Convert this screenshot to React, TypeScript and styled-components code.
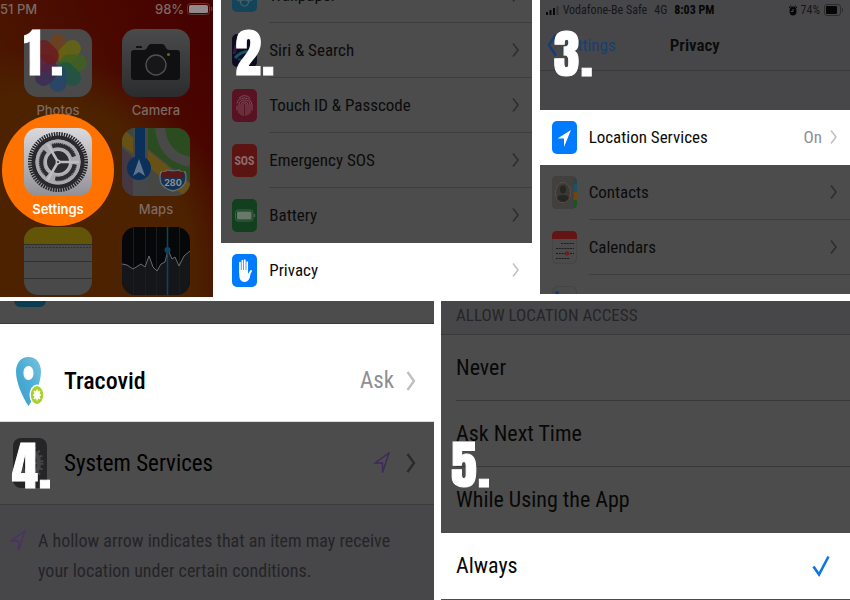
import React from "react";
import styled, { createGlobalStyle, css } from "styled-components";

const GlobalStyle = createGlobalStyle`
  *, *::before, *::after { box-sizing: border-box; }
  body { margin: 0; background: #ffffff; }
`;

const narrow = `"Roboto Condensed", Roboto, "Liberation Sans", sans-serif`;
const dimWhite = "#4c4c4c";
const dimGrey = "#474749";

const Page = styled.main`
  display: flex;
  flex-direction: column;
  gap: 3px;
  overflow: hidden;
  font-family: ${narrow};
  color: #0b0b0b;
`;

const TopRow = styled.div`
  display: grid;
  grid-template-columns: 213fr 310fr 310fr;
  column-gap: 8px;
  align-items: start;
`;

const BottomRow = styled.div`
  display: grid;
  grid-template-columns: 434fr 409fr;
  column-gap: 7px;
  align-items: start;
`;

const Panel = styled.section`
  position: relative;
  overflow: hidden;
  background: ${dimWhite};
`;

const StepLabel = styled.span<{ $x: number; $y: number }>`
  position: absolute;
  left: ${(p) => p.$x}px;
  top: ${(p) => p.$y}px;
  display: flex;
  font-family: Anton, Impact, "Roboto Condensed", sans-serif;
  font-size: 52px;
  line-height: 60px;
  color: #ffffff;
  -webkit-text-stroke: 1px #ffffff;
  pointer-events: none;
`;

const Digit = styled.span`
  min-width: 27px;
`;

const Step = ({ n, x, y }: { n: number; x: number; y: number }) => (
  <StepLabel $x={x} $y={y}><Digit>{n}</Digit><span>.</span></StepLabel>
);

const plainButton = css`
  border: 0;
  margin: 0;
  padding: 0;
  background: none;
  font: inherit;
  color: inherit;
  text-align: left;
  cursor: pointer;
`;

/* ---------- Home screen ---------- */

const Home = styled(Panel)`
  height: 297px;
  background:
    radial-gradient(circle at 10% 90%, #4c2200 0 52%, rgba(76, 34, 0, 0) 66%),
    linear-gradient(240deg, #450000 0%, #4a0800 32%, #4a1800 66%, #472400 100%);
  font-family: Inter, Roboto, sans-serif;
  color: #7c6963;
`;

const HomeStatus = styled.div`
  display: flex;
  align-items: center;
  gap: 3px;
  height: 18px;
  font-size: 13px;
  font-weight: 500;
  white-space: nowrap;
`;

const Spacer = styled.span`
  flex: 1;
`;

const Apps = styled.div`
  display: grid;
  grid-template-columns: 68px 68px;
  column-gap: 30px;
  grid-auto-rows: 99px;
  padding: 11px 0 0 24px;
`;

const AppButton = styled.button<{ $lit?: boolean }>`
  ${plainButton}
  position: relative;
  display: flex;
  flex-direction: column;
  align-items: center;
  gap: 4px;
  font-size: 13px;
  line-height: 18px;
  font-weight: ${(p) => (p.$lit ? 600 : 500)};
  color: ${(p) => (p.$lit ? "#ffffff" : "inherit")};

  > svg { position: relative; flex: none; }
  > span { position: relative; }
`;

const Halo = styled.i`
  position: absolute;
  width: 112px;
  height: 112px;
  left: -22px;
  top: -14px;
  border-radius: 50%;
  background: #ff7200;
`;

const Tile = ({ id, children, fill }: { id: string; children: React.ReactNode; fill: string }) => (
  <svg width="68" height="68" viewBox="0 0 68 68" aria-hidden="true">
    <defs>
      <clipPath id={id}><rect width="68" height="68" rx="14" /></clipPath>
      <linearGradient id="steel" x2="0" y2="1"><stop stopColor="#d9d9de" /><stop offset="1" stopColor="#909096" /></linearGradient>
      <linearGradient id="shade" x2="0" y2="1"><stop stopColor="#4a4a4b" /><stop offset="1" stopColor="#2b2c2e" /></linearGradient>
    </defs>
    <g clipPath={`url(#${id})`}>
      <rect width="68" height="68" fill={fill} />
      {children}
    </g>
  </svg>
);

const petals = ["#70401b", "#66660d", "#40601c", "#1c5543", "#24446a", "#3c2b56", "#562340", "#6b1b1b"];

const PhotosIcon = () => (
  <Tile id="photos" fill="#4a4a4a">
    {petals.map((c, i) => (
      <rect key={c} x="25.5" y="5" width="17" height="27" rx="8.5" fill={c} opacity="0.82" transform={`rotate(${i * 45} 34 34)`} />
    ))}
  </Tile>
);

const CameraIcon = () => (
  <Tile id="camera" fill="url(#shade)">
    <path d="M14 19v-1q0-1 1-1h4q1 0 1 1v1z" fill="#101012" />
    <path d="M12 21h10q2 0 3-2l1-2q1-2 3-2h11q2 0 3 2l1 2q1 2 3 2h8q3 0 3 3v24q0 3-3 3H12q-3 0-3-3V24q0-3 3-3z" fill="#101012" />
    <circle cx="34" cy="36" r="10" fill="#17171a" stroke="#505053" strokeWidth="1.4" />
    <circle cx="46.5" cy="25.5" r="1.5" fill="#74650c" />
  </Tile>
);

const SettingsIcon = () => (
  <Tile id="settings" fill="url(#steel)">
    <circle cx="34" cy="34" r="28" fill="none" stroke="#252528" strokeWidth="4" strokeDasharray="1.5 1" />
    <circle cx="34" cy="34" r="24.5" fill="none" stroke="#29292c" strokeWidth="4" />
    <circle cx="34" cy="34" r="22.5" fill="#a9a9ae" />
    <circle cx="34" cy="34" r="17" fill="none" stroke="#2d2d31" strokeWidth="4.500" strokeDasharray="27 8.6" transform="rotate(8 34 34)" />
    <circle cx="34" cy="34" r="19" fill="none" stroke="#aaaab0" strokeWidth="1.500" strokeDasharray="1 1" opacity="0.7" />
    <circle cx="34" cy="34" r="12" fill="#2d2d31" stroke="#b4b4b8" strokeWidth="2" />
    <path d="M34 34H55M34 34L23.500 15.800M34 34L23.500 52.200" stroke="#bdbdc2" strokeWidth="2.6" />
    <circle cx="34" cy="34" r="2.5" fill="#bdbdc2" />
    <circle cx="34" cy="34" r="1" fill="#2d2d31" />
  </Tile>
);

const MapsIcon = () => (
  <Tile id="maps" fill="#464644">
    <path d="M22 0h46v54L24 19z" fill="#2b4c20" />
    <path d="M0 20l16 14v34H0z" fill="#463842" />
    <path d="M0 15V0h13v22z" fill="#3c4740" />
    <path d="M0 17l62 51h6V56L22 19 0 0z" fill="#685116" />
    <path d="M38 0q3 29 30 34" fill="none" stroke="#494947" strokeWidth="10" />
    <path d="M11 0h15v68H11z" fill="#454848" />
    <path d="M13 0h10v45H13z" fill="#0b315b" />
    <circle cx="17" cy="40" r="12" fill="#0b315b" />
    <path d="M17 31l6 17-6-4-6 4z" fill="#607489" />
    <path d="M39 44q4 1 6-2 6 2 12 0 2 3 6 2 2 5 0 11-3 6-12 8-9-2-12-8-2-6 0-11z" fill="#163250" stroke="#657079" strokeWidth="1.3" />
    <path d="M40 44q5 0 6-1 5 1 10 0 2 1 6 1v5H40z" fill="#5a1718" />
    <text x="51" y="58" fontSize="9" fontWeight="700" textAnchor="middle" fill="#8a949d" fontFamily="Inter, sans-serif">280</text>
  </Tile>
);

const NotesIcon = () => (
  <Tile id="notes" fill="#494949">
    <rect width="68" height="17" fill="#625508" />
    <path d="M0 17.500H68M0 34.500H68M0 51.500H68" stroke="#303030" />
    <path d="M2 20.500H68" stroke="#2c2c2c" strokeDasharray="1.5 1.5" />
  </Tile>
);

const StocksIcon = () => (
  <Tile id="stocks" fill="#060709">
    <path d="M0 37l5 1 6 4 8-5 4 3 4-11 4 11 4 4 4-7 4-2 3-12 4 9 3-2 4 9 5-10 6-5v44H0z" fill="#14161a" />
    <path d="M11.500 0v68M23.500 0v68M34.500 0v68M57.500 0v68" stroke="#1c1d20" />
    <path d="M0 37l5 1 6 4 8-5 4 3 4-11 4 11 4 4 4-7 4-2 3-12 4 9 3-2 4 9 5-10 6-5" fill="none" stroke="#6b6b6d" />
    <path d="M45.500 0v68" stroke="#0c4463" strokeWidth="1.5" />
    <circle cx="45.5" cy="23" r="3" fill="#0c4463" />
  </Tile>
);

/* ---------- Settings lists ---------- */

const Row = styled.button<{ $inset: number; $lit?: boolean }>`
  ${plainButton}
  display: flex;
  flex: none;
  align-items: center;
  gap: 12px;
  width: 100%;
  height: 55px;
  padding-left: ${(p) => p.$inset}px;
  background: ${(p) => (p.$lit ? "#ffffff" : dimWhite)};

  > svg { flex: none; }
`;

const RowBody = styled.span<{ $line?: boolean }>`
  display: flex;
  flex: 1;
  align-items: center;
  gap: 8px;
  height: 100%;
  padding-right: 13px;
  border-bottom: 1px solid ${(p) => (p.$line ? "#3d3d3e" : "transparent")};
  font-size: 17px;
  white-space: nowrap;
`;

const RowText = styled.span`
  flex: 1;
`;

const RowValue = styled.span`
  color: #8e8e93;
`;

const Clip = styled.div<{ $h: number; $end?: boolean }>`
  display: flex;
  align-items: ${(p) => (p.$end ? "flex-end" : "flex-start")};
  height: ${(p) => p.$h}px;
  overflow: hidden;
`;

const Chevron = ({ color, big }: { color: string; big?: boolean }) => (
  <svg width={big ? 10 : 7} height={big ? 20 : 14} viewBox={big ? "0 0 10 20" : "0 0 7 14"} fill="none" aria-hidden="true">
    <path d={big ? "M1.500 1L8 10L1.500 19" : "M1 0.500L6 7L1 13.500"} stroke={color} strokeWidth={big ? 2.4 : 1.6} />
  </svg>
);

const Glyph = ({ fill, children }: { fill: string; children?: React.ReactNode }) => (
  <svg width="25" height="33" viewBox="0 0 25 33" aria-hidden="true">
    <rect width="25" height="33" rx="5" fill={fill} />
    {children}
  </svg>
);

const WallpaperGlyph = () => (
  <Glyph fill="#144459">
    <g fill="none" stroke="#47626d" strokeWidth="1.2">
      <circle cx="12.5" cy="12" r="4" /><circle cx="8" cy="18" r="4" /><circle cx="17" cy="18" r="4" />
      <circle cx="12.5" cy="23" r="4" /><circle cx="12.5" cy="18" r="3" />
    </g>
  </Glyph>
);

const SiriGlyph = () => (
  <Glyph fill="#0e0d1e">
    <path d="M2 20Q5 5 12 3" stroke="#351647" strokeWidth="3" fill="none" />
    <path d="M3 24q9-10 19-4" stroke="#195267" strokeWidth="3" fill="none" />
    <path d="M6 25q9 4 15-12" stroke="#183459" strokeWidth="2" fill="none" />
  </Glyph>
);

const TouchGlyph = () => (
  <Glyph fill="#591224">
    <g fill="none" stroke="#7d4b55" strokeWidth="1" strokeLinecap="round">
      <path d="M7 9q5.500-5 11 0M5 14q1-5 7.500-5t7.500 7v5M5 21v-4M7 24v-8q0-5 5.500-5t5.500 5v8M9 25.500V16q0-3.200 3.500-3.200T16 16v9.500M11 26.500V16q0-1.600 1.500-1.600T14 16v10.500" />
    </g>
  </Glyph>
);

const SosGlyph = () => (
  <Glyph fill="#5c1413">
    <text x="12.5" y="21" fontSize="12" fontWeight="700" textAnchor="middle" fill="#8a6c6c" fontFamily={narrow}>SOS</text>
  </Glyph>
);

const BatteryGlyph = () => (
  <Glyph fill="#123f1d">
    <rect x="3.5" y="11" width="17.5" height="11" rx="2.5" fill="none" stroke="#44614b" />
    <rect x="5" y="12.5" width="14.5" height="8" rx="1" fill="#68786b" />
    <path d="M22.500 15v3" stroke="#44614b" strokeWidth="1.5" />
  </Glyph>
);

const HandGlyph = () => (
  <Glyph fill="#007aff">
    <g stroke="#ffffff" strokeWidth="1.7" strokeLinecap="round" fill="none">
      <path d="M8 18V8.500M10.400 17V6.500M12.800 17V6M15.200 18V8" />
      <path d="M16 22l3-5" strokeWidth="2" />
    </g>
    <path d="M7.200 16h8.800v4l1.500-1 1 1q-1 8-6 8-5.300 0-5.300-8z" fill="#ffffff" />
  </Glyph>
);

const ArrowGlyph = () => (
  <Glyph fill="#007aff">
    <path d="M19 9L5.500 17.500H12V26z" fill="#ffffff" />
  </Glyph>
);

const ContactsGlyph = () => (
  <Glyph fill="#42403c">
    <path d="M21 2v9h4V5q0-2-4-3z" fill="#2b4448" /><path d="M21.500 8H25v8h-3.500z" fill="#1d5266" />
    <path d="M21.500 16H25v8h-3.500z" fill="#704512" /><path d="M21.500 24H25v4q0 3-3.500 4z" fill="#1d5227" />
    <rect width="21.5" height="33" rx="4" fill="#42403c" />
    <ellipse cx="11" cy="16.5" rx="7.5" ry="10" fill="#3a3935" stroke="#54524b" />
    <ellipse cx="11" cy="13.5" rx="3" ry="4" fill="#262622" />
    <path d="M5 22q1-3 6-3t6 3q-2 4-6 4t-6-4z" fill="#262622" />
  </Glyph>
);

const CalendarGlyph = () => (
  <Glyph fill="#4b4b4b">
    <rect x="0.5" y="0.5" width="24" height="32" rx="5" fill="none" stroke="#454545" />
    <path d="M0 8V5q0-5 5-5h15q5 0 5 5v3z" fill="#641414" />
    <path d="M9 12.500h13M4 17.500h18M4 22.500h18M4 27.500h13" stroke="#1c1c1c" strokeDasharray="2 0.8" />
    <circle cx="15" cy="22.5" r="2.2" fill="#741b1b" />
  </Glyph>
);

const RemindersGlyph = () => (
  <Glyph fill="#4b4b4b">
    <rect x="0.5" y="0.5" width="24" height="32" rx="5" fill="none" stroke="#454545" />
    <circle cx="5" cy="7" r="2" fill="#143a70" />
    <path d="M9 8.500h12" stroke="#3d3d3d" />
  </Glyph>
);

/* ---------- Privacy header ---------- */

const StatusBar = styled.div`
  display: flex;
  align-items: center;
  gap: 7px;
  height: 20px;
  padding: 0 6px;
  background: ${dimGrey};
  font-size: 12px;
  white-space: nowrap;
  color: #161617;
`;

const StatusGroup = styled.span`
  display: flex;
  align-items: center;
  gap: 4px;
`;

const Strong = styled.strong`
  color: #060606;
`;

const NavBar = styled.header`
  display: grid;
  grid-template-columns: 1fr auto 1fr;
  align-items: center;
  height: 51px;
  padding: 0 7px;
  background: ${dimGrey};
  border-bottom: 1px solid #39393a;
  font-size: 17px;
`;

const Back = styled.a`
  display: flex;
  align-items: center;
  gap: 4px;
  color: #173f70;
  text-decoration: none;
`;

const NavTitle = styled.h2`
  margin: 0;
  font-size: inherit;
  font-weight: 600;
`;

const GroupGap = styled.div`
  height: 39px;
  background: ${dimGrey};
`;

/* ---------- Location services ---------- */

const Sliver = styled(Clip)`
  padding-left: 14px;
  border-bottom: 1px solid #3a3a3a;
`;

const LargeRow = styled.button<{ $lit?: boolean }>`
  ${plainButton}
  display: flex;
  align-items: center;
  gap: 16px;
  width: 100%;
  height: ${(p) => (p.$lit ? 98 : 83)}px;
  padding: ${(p) => (p.$lit ? 16 : 0)}px 18px 0 12px;
  background: ${(p) => (p.$lit ? "#ffffff" : dimWhite)};
  border-bottom: 1px solid ${(p) => (p.$lit ? "#dddddd" : "#3c3c3c")};
  font-size: 23px;
  color: #000000;
  white-space: nowrap;
`;

const Medium = styled.span`
  flex: 1;
  font-size: 24px;
  font-weight: 500;
`;

const ValueGroup = styled.span`
  display: flex;
  align-items: center;
  gap: 12px;
`;

const Note = styled.div`
  display: flex;
  gap: 12px;
  align-items: flex-start;
  height: 96px;
  padding: 21px 12px 0 10px;
  background: ${dimGrey};
  font-size: 18px;
  line-height: 30px;
  color: #242427;

  > svg { flex: none; margin-top: 4px; }
`;

const NoteText = styled.p`
  margin: 0;
  max-width: 372px;
`;

const HollowArrow = ({ color }: { color: string }) => (
  <svg width="16" height="22" viewBox="0 0 16 22" fill="none" aria-hidden="true">
    <path d="M15 1L1 11H8.500V20.500z" stroke={color} strokeWidth="1.4" />
  </svg>
);

const PinIcon = () => (
  <svg width="36" height="50" viewBox="0 0 36 50" aria-hidden="true">
    <defs>
      <linearGradient id="pin" x1="1" y1="0" x2="0" y2="1"><stop stopColor="#7cc3dd" /><stop offset="0.5" stopColor="#4badd5" /><stop offset="1" stopColor="#3c9ccb" /></linearGradient>
    </defs>
    <path fillRule="evenodd" d="M16.500 1C9 1 4 7 4 15.500 4 27 11 42 16.500 50 22 42 29 27 29 15.500 29 7 24 1 16.500 1zm0 9c3 0 5 3 5 7s-2 7-5 7-5-3-5-7 2-7 5-7z" fill="url(#pin)" />
    <ellipse cx="25" cy="39" rx="7.5" ry="10.5" fill="#ffffff" />
    <ellipse cx="25" cy="39" rx="6.2" ry="9" fill="#a9d12d" />
    <ellipse cx="25" cy="39" rx="3" ry="4" fill="#ffffff" />
    <path d="M25 33.500v11M21 39h8M22 35l6 8M28 35l-6 8" stroke="#ffffff" strokeWidth="1.5" />
  </svg>
);

const CogIcon = () => (
  <svg width="36" height="50" viewBox="0 0 36 50" aria-hidden="true">
    <rect x="1" width="34" height="50" rx="8" fill="#252528" />
    <ellipse cx="18" cy="25" rx="12" ry="16" fill="none" stroke="#454548" strokeWidth="3" strokeDasharray="2 3" />
    <ellipse cx="18" cy="25" rx="9" ry="12" fill="none" stroke="#454548" strokeWidth="4" />
    <path d="M18 25h9M18 25l-5-9M18 25l-5 9" stroke="#454548" strokeWidth="2" />
  </svg>
);

/* ---------- Access options ---------- */

const Options = styled.fieldset`
  margin: 0;
  padding: 0;
  border: 0;
  min-width: 0;
  font-size: 22px;
  color: #080808;
`;

const Legend = styled.legend`
  display: block;
  width: 100%;
  height: 34px;
  padding: 4px 15px 0;
  background: ${dimGrey};
  border-bottom: 1px solid #39393a;
  font-size: 17px;
  line-height: 20px;
  color: #252527;
`;

const Option = styled.label<{ $lit?: boolean }>`
  display: flex;
  height: 66px;
  padding-left: 15px;
  background: ${(p) => (p.$lit ? "#ffffff" : dimWhite)};
  cursor: pointer;
`;

const OptionBody = styled.span<{ $line?: boolean }>`
  display: flex;
  flex: 1;
  align-items: center;
  justify-content: space-between;
  padding-right: 20px;
  border-bottom: 1px solid ${(p) => (p.$line ? "#383838" : "transparent")};
`;

const Radio = styled.input`
  appearance: none;
  width: 0;
  height: 0;
  margin: 0;
`;

const EndLine = styled.div`
  height: 2px;
  background: ${dimWhite};
`;

const settings = [
  { name: "Siri & Search", icon: <SiriGlyph /> },
  { name: "Touch ID & Passcode", icon: <TouchGlyph /> },
  { name: "Emergency SOS", icon: <SosGlyph /> },
  { name: "Battery", icon: <BatteryGlyph /> },
  { name: "Privacy", icon: <HandGlyph />, lit: true },
];

const ListRow = ({ name, icon, inset, lit, line, value }: {
  name: string; icon: React.ReactNode; inset: number; lit?: boolean; line?: boolean; value?: string;
}) => (
  <Row type="button" $inset={inset} $lit={lit}>
    {icon}
    <RowBody $line={line}>
      <RowText>{name}</RowText>
      {value && <RowValue>{value}</RowValue>}
      <Chevron color={lit ? "#c2c2c6" : "#2e2e30"} />
    </RowBody>
  </Row>
);

export default function App() {
  const [choice, setChoice] = React.useState("Always");
  return (
    <>
      <GlobalStyle />
      <Page>
        <TopRow>
          <Home>
            <HomeStatus>
              <span>51 PM</span>
              <Spacer />
              <span>98%</span>
              <svg width="26" height="12" viewBox="0 0 26 12" aria-hidden="true">
                <rect x="0.5" y="0.5" width="22" height="11" rx="3" fill="none" stroke="#593a37" />
                <rect x="2" y="2" width="19" height="8" rx="1.5" fill="#94898a" />
                <path d="M24.500 4v4" stroke="#593a37" strokeWidth="1.5" />
              </svg>
            </HomeStatus>
            <Apps>
              <AppButton type="button"><PhotosIcon /><span>Photos</span></AppButton>
              <AppButton type="button"><CameraIcon /><span>Camera</span></AppButton>
              <AppButton type="button" $lit><Halo /><SettingsIcon /><span>Settings</span></AppButton>
              <AppButton type="button"><MapsIcon /><span>Maps</span></AppButton>
              <AppButton type="button" aria-label="Notes"><NotesIcon /></AppButton>
              <AppButton type="button" aria-label="Stocks"><StocksIcon /></AppButton>
            </Apps>
            <Step n={1} x={24} y={23} />
          </Home>

          <Panel>
            <Clip $h={23} $end>
              <ListRow name="Wallpaper" icon={<WallpaperGlyph />} inset={11} line />
            </Clip>
            {settings.map((s, i) => (
              <ListRow key={s.name} {...s} inset={11} line={i < 3} />
            ))}
            <Step n={2} x={14} y={23} />
          </Panel>

          <Panel>
            <StatusBar>
              <StatusGroup>
                <svg width="13" height="9" viewBox="0 0 13 9" aria-hidden="true">
                  <path d="M0 6h2v3H0zM3.500 4h2v5h-2zM7 2h2v7H7z" fill="#080808" />
                  <path d="M10.500 0h2v9h-2z" fill="#333334" />
                </svg>
                <span>Vodafone-Be Safe</span>
              </StatusGroup>
              <span>4G</span>
              <Strong>8:03 PM</Strong>
              <Spacer />
              <StatusGroup>
                <svg width="8" height="11" viewBox="0 0 8 11" aria-hidden="true">
                  <ellipse cx="4" cy="6" rx="3.5" ry="4.5" fill="#080808" />
                  <path d="M0 3l2-2.500M8 3L6 0.500" stroke="#080808" fill="none" />
                  <path d="M4 4v2.500h-2" stroke="#4c4c4c" fill="none" />
                </svg>
                <span>74%</span>
                <svg width="20" height="12" viewBox="0 0 20 12" aria-hidden="true">
                  <rect x="0.5" y="0.5" width="16" height="11" rx="2.5" fill="none" stroke="#2c2c2d" />
                  <rect x="2" y="2" width="11" height="8" rx="1" fill="#050505" />
                  <path d="M18.500 4v4" stroke="#2c2c2d" />
                </svg>
              </StatusGroup>
            </StatusBar>
            <NavBar>
              <Back href="#settings">
                <svg width="10" height="24" viewBox="0 0 10 24" fill="none" aria-hidden="true">
                  <path d="M9 1.500L1.800 12L9 22.500" stroke="#123f77" strokeWidth="2.4" />
                </svg>
                Settings
              </Back>
              <NavTitle>Privacy</NavTitle>
            </NavBar>
            <GroupGap />
            <ListRow name="Location Services" icon={<ArrowGlyph />} inset={12} lit value="On" />
            <ListRow name="Contacts" icon={<ContactsGlyph />} inset={12} line />
            <ListRow name="Calendars" icon={<CalendarGlyph />} inset={12} line />
            <Clip $h={19}>
              <ListRow name="Reminders" icon={<RemindersGlyph />} inset={12} />
            </Clip>
            <Step n={3} x={14} y={24} />
          </Panel>
        </TopRow>

        <BottomRow>
          <Panel>
            <Sliver $h={23}>
              <svg width="32" height="7" viewBox="0 0 32 7" aria-hidden="true">
                <path d="M0 0h32q-1 6-7 6H7Q1 6 0 0z" fill="#0d3c50" />
              </svg>
            </Sliver>
            <LargeRow type="button" $lit>
              <PinIcon />
              <Medium>Tracovid</Medium>
              <ValueGroup>
                <RowValue>Ask</RowValue>
                <Chevron color="#c0c0c3" big />
              </ValueGroup>
            </LargeRow>
            <LargeRow type="button">
              <CogIcon />
              <RowText>System Services</RowText>
              <HollowArrow color="#3d2a5a" />
              <Chevron color="#2b2b2d" big />
            </LargeRow>
            <Note>
              <HollowArrow color="#4b3263" />
              <NoteText>A hollow arrow indicates that an item may receive your location under certain conditions.</NoteText>
            </Note>
            <Step n={4} x={12} y={135} />
          </Panel>

          <Panel>
            <Options>
              <Legend>ALLOW LOCATION ACCESS</Legend>
              {["Never", "Ask Next Time", "While Using the App", "Always"].map((name, i) => (
                <Option key={name} $lit={name === "Always"}>
                  <OptionBody $line={i < 2}>
                    <span>{name}</span>
                    <Radio type="radio" name="access" checked={choice === name} onChange={() => setChoice(name)} />
                    {choice === name && (
                      <svg width="18" height="22" viewBox="0 0 18 22" fill="none" aria-hidden="true">
                        <path d="M1.500 11.500L7 19.500L16.500 1.500" stroke="#0f76e0" strokeWidth="2.6" />
                      </svg>
                    )}
                  </OptionBody>
                </Option>
              ))}
            </Options>
            <EndLine />
            <Step n={5} x={10} y={134} />
          </Panel>
        </BottomRow>
      </Page>
    </>
  );
}
